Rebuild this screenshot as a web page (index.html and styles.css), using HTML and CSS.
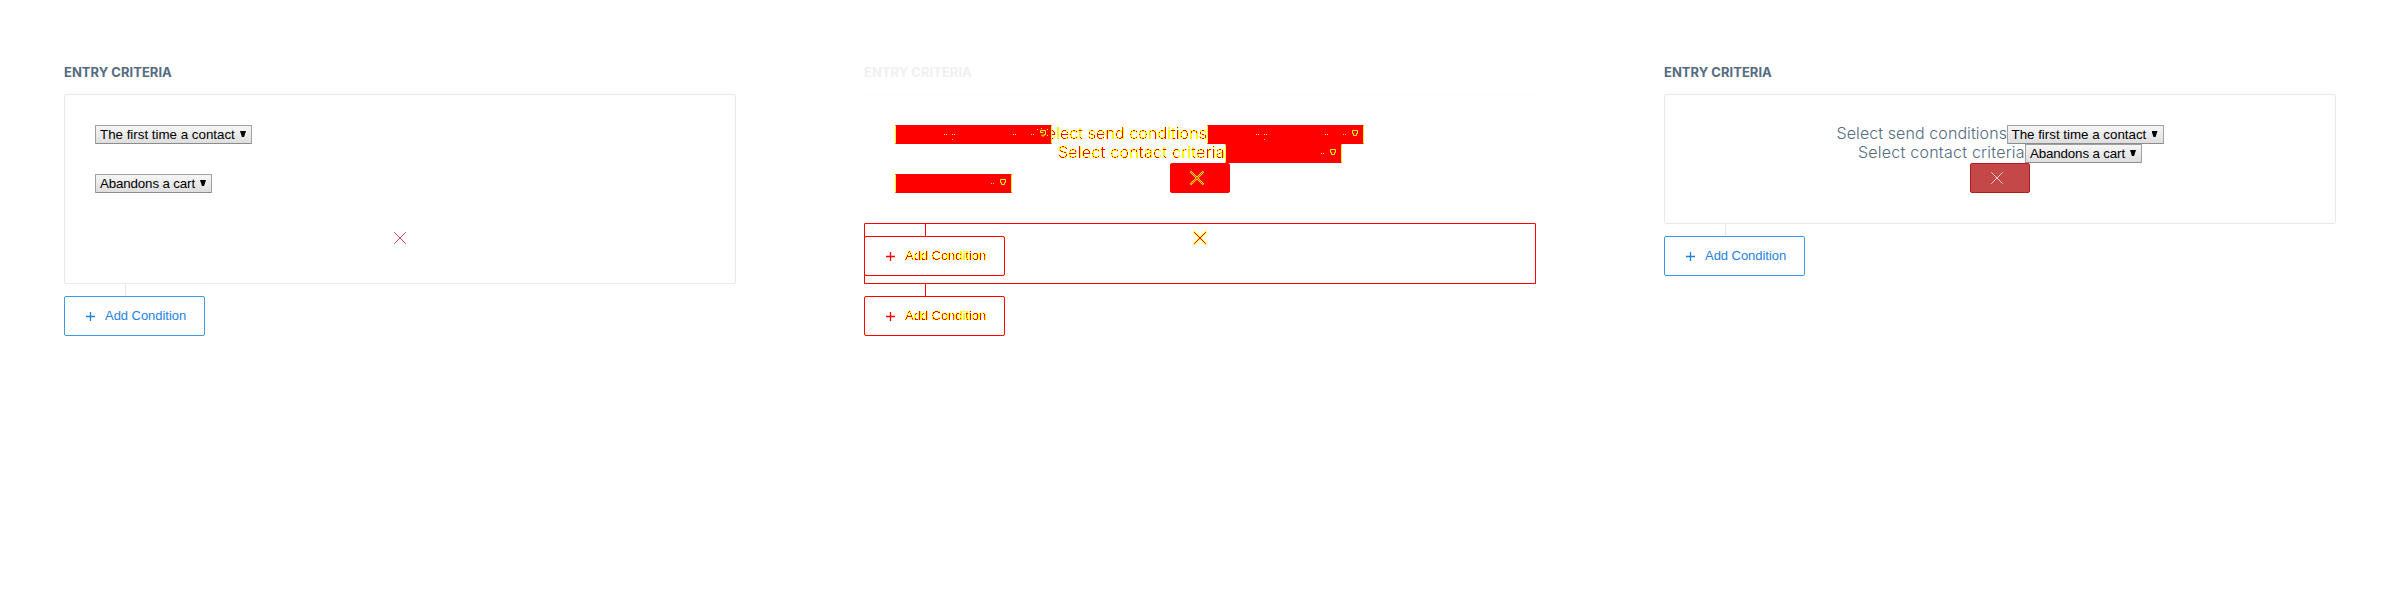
FILE: index.html
```html
<!DOCTYPE html>
<html lang="en">
<head>
<meta charset="utf-8">
<title>Entry criteria</title>
<link rel="stylesheet" href="styles.css">
</head>
<body>
<svg class="defs" width="0" height="0">
  <filter id="edges" x="-5%" y="-20%" width="110%" height="140%" color-interpolation-filters="sRGB">
    <feComponentTransfer in="SourceAlpha" result="outer"><feFuncA type="linear" slope="60" intercept="-4"/></feComponentTransfer>
    <feFlood flood-color="#ff0"/>
    <feComposite in2="outer" operator="in" result="yellow"/>
    <feComponentTransfer in="SourceAlpha" result="inner"><feFuncA type="linear" slope="60" intercept="-44"/></feComponentTransfer>
    <feFlood flood-color="#f00"/>
    <feComposite in2="inner" operator="in" result="red"/>
    <feMerge><feMergeNode in="yellow"/><feMergeNode in="red"/></feMerge>
  </filter>
</svg>
<main class="panels">
  <section class="panel">
    <h2 class="title">ENTRY CRITERIA</h2>
    <div class="card stacked">
      <div class="select wide">The first time a contact<i class="arrow"></i></div>
      <div class="select narrow">Abandons a cart<i class="arrow"></i></div>
      <svg class="cross" viewBox="0 0 12 12"><path d="M.3.3l11.4 11.4M11.7.3L.3 11.7"/></svg>
    </div>
    <div class="connector"></div>
    <div class="add"><svg class="plus" viewBox="0 0 9 9"><path d="M0 4.5h9M4.5 0v9"/></svg><span>Add Condition</span></div>
  </section>

  <section class="panel diff">
    <div class="layer before">
      <h2 class="title">ENTRY CRITERIA</h2>
      <div class="card stacked">
        <div class="select wide"><svg class="specks" viewBox="0 0 157 19"><path d="M49 9.5h1M51 9.5h1M57 9.5h1M59 9.5h1M57 14.5h1M118 9.5h1M120 9.5h1M136 9.5h1M138 9.5h1M142 4.5h1M146 3.5h1M152 4.5h1M152 10.5h1M145.5 5.5h5v4h-1.500v1.500h-2v-1.500M145.500 5.500v2h3"/></svg></div>
        <div class="select narrow"><svg class="specks" viewBox="0 0 117 19"><path d="M96 9.5h1M98 9.5h1M105.5 5.5h5v3h-1v2h-3v-2h-1z"/></svg></div>
        <svg class="cross" viewBox="0 0 12 12"><path class="halo" d="M-.5-.5l13 13M12.500-.5l-13 13"/><path d="M.3.3l11.4 11.4M11.7.3L.3 11.7"/></svg>
      </div>
      <div class="connector"></div>
      <div class="add"><svg class="plus" viewBox="0 0 9 9"><path d="M0 4.5h9M4.5 0v9"/></svg><span>Add Condition</span></div>
    </div>
    <div class="layer after">
      <h2 class="title ghost">ENTRY CRITERIA</h2>
      <div class="card centered">
        <div class="row"><span class="label first">Select send conditions</span><div class="select wide"><svg class="specks" viewBox="0 0 157 19"><path d="M49 9.5h1M51 9.5h1M57 9.5h1M59 9.5h1M57 14.5h1M118 9.5h1M120 9.5h1M136 9.5h1M138 9.5h1M145.5 5.5h5v3h-1v2h-3v-2h-1z"/></svg></div></div>
        <div class="row"><span class="label second">Select contact criteria</span><div class="select narrow"><svg class="specks" viewBox="0 0 117 19"><path d="M96 9.5h1M98 9.5h1M105.5 5.5h5v3h-1v2h-3v-2h-1z"/></svg></div></div>
        <div class="remove"><svg class="cross" viewBox="0 0 12 12"><path class="halo" d="M-.5-.5l13 13M12.500-.5l-13 13"/><path d="M.3.3l11.4 11.4M11.7.3L.3 11.7"/></svg></div>
      </div>
      <div class="connector"></div>
      <div class="add"><svg class="plus" viewBox="0 0 9 9"><path d="M0 4.5h9M4.5 0v9"/></svg><span>Add Condition</span></div>
    </div>
  </section>

  <section class="panel">
    <h2 class="title">ENTRY CRITERIA</h2>
    <div class="card centered">
      <div class="row"><span class="label first">Select send conditions</span><div class="select wide">The first time a contact<i class="arrow"></i></div></div>
      <div class="row"><span class="label second">Select contact criteria</span><div class="select narrow">Abandons a cart<i class="arrow"></i></div></div>
      <div class="remove"><svg class="cross" viewBox="0 0 12 12"><path d="M.3.3l11.4 11.4M11.7.3L.3 11.7"/></svg></div>
    </div>
    <div class="connector"></div>
    <div class="add"><svg class="plus" viewBox="0 0 9 9"><path d="M0 4.5h9M4.5 0v9"/></svg><span>Add Condition</span></div>
  </section>
</main>
</body>
</html>
```
FILE: styles.css
```css
* { box-sizing: border-box; }
body { margin: 0; background: #fff; font-family: "Liberation Sans", Arial, sans-serif; }
.defs { display: block; }
.panels { display: grid; grid-template-columns: repeat(3, 800px); height: 600px; overflow: hidden; }
.panel { padding: 64px; }
.title { margin: 0 0 10px; height: 20px; font: 700 13px/17px Inter, sans-serif; letter-spacing: .02px; color: #546b81; white-space: nowrap; }
.card { border: 1px solid #e9e9e9; border-radius: 2px; padding: 30px; display: flex; flex-direction: column; }
.stacked { height: 190px; align-items: flex-start; }
.stacked .narrow { margin-top: 30px; }
.stacked .cross { margin-top: 39px; align-self: center; }
.centered { height: 130px; align-items: center; }
.select { height: 19px; border: 1px solid #a0a0a0; border-bottom-color: #8c8c8c; border-radius: 1px; background: linear-gradient(#f6f6f6, #dedede); color: #000; font-size: 13.333px; line-height: 17px; padding: 0 5px 0 4px; display: flex; white-space: nowrap; flex: none; }
.wide { width: 157px; }
.narrow { width: 117px; letter-spacing: -.14px; }
.arrow { width: 6px; height: 6px; margin: 5px 0 0 auto; background: #000; clip-path: polygon(0 0, 100% 0, 67% 100%, 33% 100%); }
.row { display: flex; height: 19px; }
.label { font: 300 16px/17px Inter, sans-serif; color: #546b81; white-space: nowrap; }
.first { width: 170px; letter-spacing: .09px; }
.second { width: 167px; letter-spacing: .24px; }
.cross { display: block; width: 12px; height: 12px; fill: none; stroke: #c84848; stroke-width: 1; overflow: visible; flex: none; }
.remove { width: 60px; height: 30px; padding: 8px 20px; border: 1px solid #b51c1c; border-radius: 2px; background: #c44848; flex: none; }
.remove .cross { stroke: #f3d0d0; }
.connector { width: 1px; height: 12px; margin-left: 61px; background: #e6e6e6; }
.add { width: 141px; height: 40px; border: 1px solid #4298e8; border-radius: 2px; padding: 0 0 2px 21px; display: flex; align-items: center; gap: 10px; color: #1e82e2; font-size: 13px; letter-spacing: -.04px; white-space: nowrap; }
.plus { width: 9px; height: 9px; fill: none; stroke: #1e82e2; stroke-width: 1.3; position: relative; top: 1px; }
.diff { display: grid; grid-template: 1fr / 672px; }
.layer { grid-area: 1 / 1; }
.before { z-index: 1; }
.diff .title { color: #f0f0f0; }
.diff .ghost { visibility: hidden; }
.diff .card { border: 1px solid transparent; border-bottom-color: #f00; border-top-color: #fbfbfb; border-radius: 0; }
.before .card { background: linear-gradient(#f00, #f00) 0 100% / 1px 60px no-repeat border-box, linear-gradient(#f00, #f00) 100% 100% / 1px 60px no-repeat border-box; }
.diff .select, .diff .remove { background: #f00; border-color: #f00; padding: 0; }
.diff .select { border-left-color: #ff0; border-right-color: #ff0; }
.diff .remove { padding: 8px 20px; }
.specks { width: 157px; height: 19px; margin: -1px; fill: none; stroke: #ff0; flex: none; }
.narrow .specks { width: 117px; }
.diff .label, .diff .add span { color: #000; filter: url(#edges); }
.diff .cross { stroke: #f00; }
.diff .halo { stroke: #ff0; stroke-width: 2; }
.diff .remove path:not(.halo) { stroke: #f00; stroke-width: .7; }
.diff .connector { background: #f00; }
.diff .add {
  border-color: #f00;
  background:
    linear-gradient(#ff0, #ff0) 0 0 / 2px 2px no-repeat,
    linear-gradient(#ff0, #ff0) 100% 0 / 2px 2px no-repeat,
    linear-gradient(#ff0, #ff0) 0 100% / 2px 2px no-repeat,
    linear-gradient(#ff0, #ff0) 100% 100% / 2px 2px no-repeat;
  background-origin: border-box;
}
.diff .plus { stroke: #f00; }
```
